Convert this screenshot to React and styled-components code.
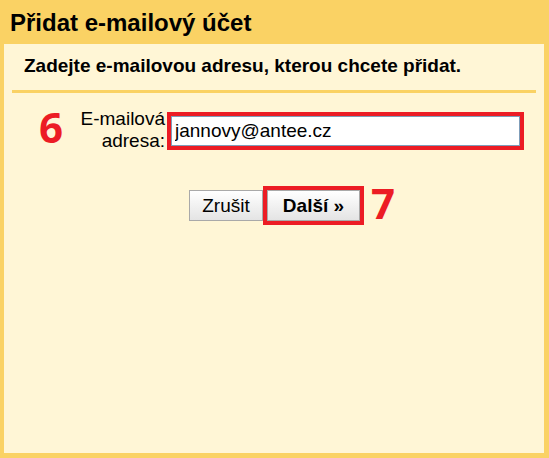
import React from "react";
import styled, { createGlobalStyle } from "styled-components";

const Global = createGlobalStyle`
  html, body { margin: 0; padding: 0; }
  body { font-family: "Liberation Sans", Arial, sans-serif; }
`;

const Frame = styled.div`
  width: 549px;
  height: 458px;
  box-sizing: border-box;
  background: #fad264;
  padding: 0 5px 5px 4px;
  display: flex;
  flex-direction: column;
`;

const Header = styled.h1`
  margin: 0;
  height: 44px;
  box-sizing: border-box;
  padding: 11px 0 0 6px;
  font-size: 24px;
  line-height: 24px;
  font-weight: bold;
  color: #000;
`;

const Panel = styled.div`
  flex: 1;
  background: #fff6d6;
  position: relative;
  padding: 11px 8px 0 8px;
`;

const Subtitle = styled.p`
  margin: 0 0 0 12px;
  font-size: 19px;
  line-height: 22px;
  font-weight: bold;
  color: #000;
`;

const Divider = styled.div`
  height: 3px;
  background: #fad264;
  margin-top: 13px;
`;

const FormRow = styled.div`
  position: relative;
  display: flex;
  align-items: flex-start;
  margin-top: 15px;
  margin-left: -8px;
  gap: 2px;
`;

const Label = styled.label`
  width: 161px;
  text-align: right;
  font-size: 19px;
  line-height: 21.5px;
  color: #000;
`;

const Highlight = styled.div`
  display: flex;
  border: 4px solid #ec1c24;
  margin-top: ${(p) => p.$top || 0}px;
`;

const Input = styled.input`
  box-sizing: border-box;
  width: 349px;
  height: 30px;
  margin: 0;
  border: 1px solid #7f9db9;
  border-radius: 0;
  background: #fff;
  padding: 0 0 0 3px;
  font-family: "Liberation Sans", Arial, sans-serif;
  font-size: 19px;
  color: #000;
  outline: none;
`;

const Marker = styled.span`
  position: absolute;
  font-family: "Open Sans", sans-serif;
  font-weight: bold;
  font-size: 42px;
  line-height: 42px;
  color: #ec1c24;
  left: ${(p) => p.$left}px;
  top: ${(p) => p.$top}px;
`;

const Buttons = styled.div`
  display: flex;
  justify-content: center;
  align-items: center;
  gap: 0;
  margin-top: 35px;
  padding-left: 5px;
`;

const ButtonWrap = styled.div`
  position: relative;
  display: flex;
`;

const Button = styled.button`
  box-sizing: border-box;
  height: 31px;
  width: ${(p) => p.$w}px;
  margin: 0;
  padding: 0;
  border: 1px solid #a9a9a9;
  border-radius: 0;
  background: linear-gradient(#ffffff, #e4e4e4);
  font-family: "Liberation Sans", Arial, sans-serif;
  font-size: 19px;
  font-weight: ${(p) => (p.$primary ? "bold" : "normal")};
  color: #000;
`;

export default function App() {
  return (
    <>
      <Global />
      <Frame>
        <Header>Přidat e-mailový účet</Header>
        <Panel>
          <Subtitle>Zadejte e-mailovou adresu, kterou chcete přidat.</Subtitle>
          <Divider />
          <FormRow>
            <Marker $left={35} $top={-2}>6</Marker>
            <Label htmlFor="email">
              E-mailová
              <br />
              adresa:
            </Label>
            <Highlight $top={4}>
              <Input id="email" defaultValue="jannovy@antee.cz" />
            </Highlight>
          </FormRow>
          <Buttons>
            <Button $w={74}>Zrušit</Button>
            <ButtonWrap>
              <Highlight>
                <Button $w={93} $primary>
                  Další »
                </Button>
              </Highlight>
              <Marker $left={108} $top={-4}>7</Marker>
            </ButtonWrap>
          </Buttons>
        </Panel>
      </Frame>
    </>
  );
}
